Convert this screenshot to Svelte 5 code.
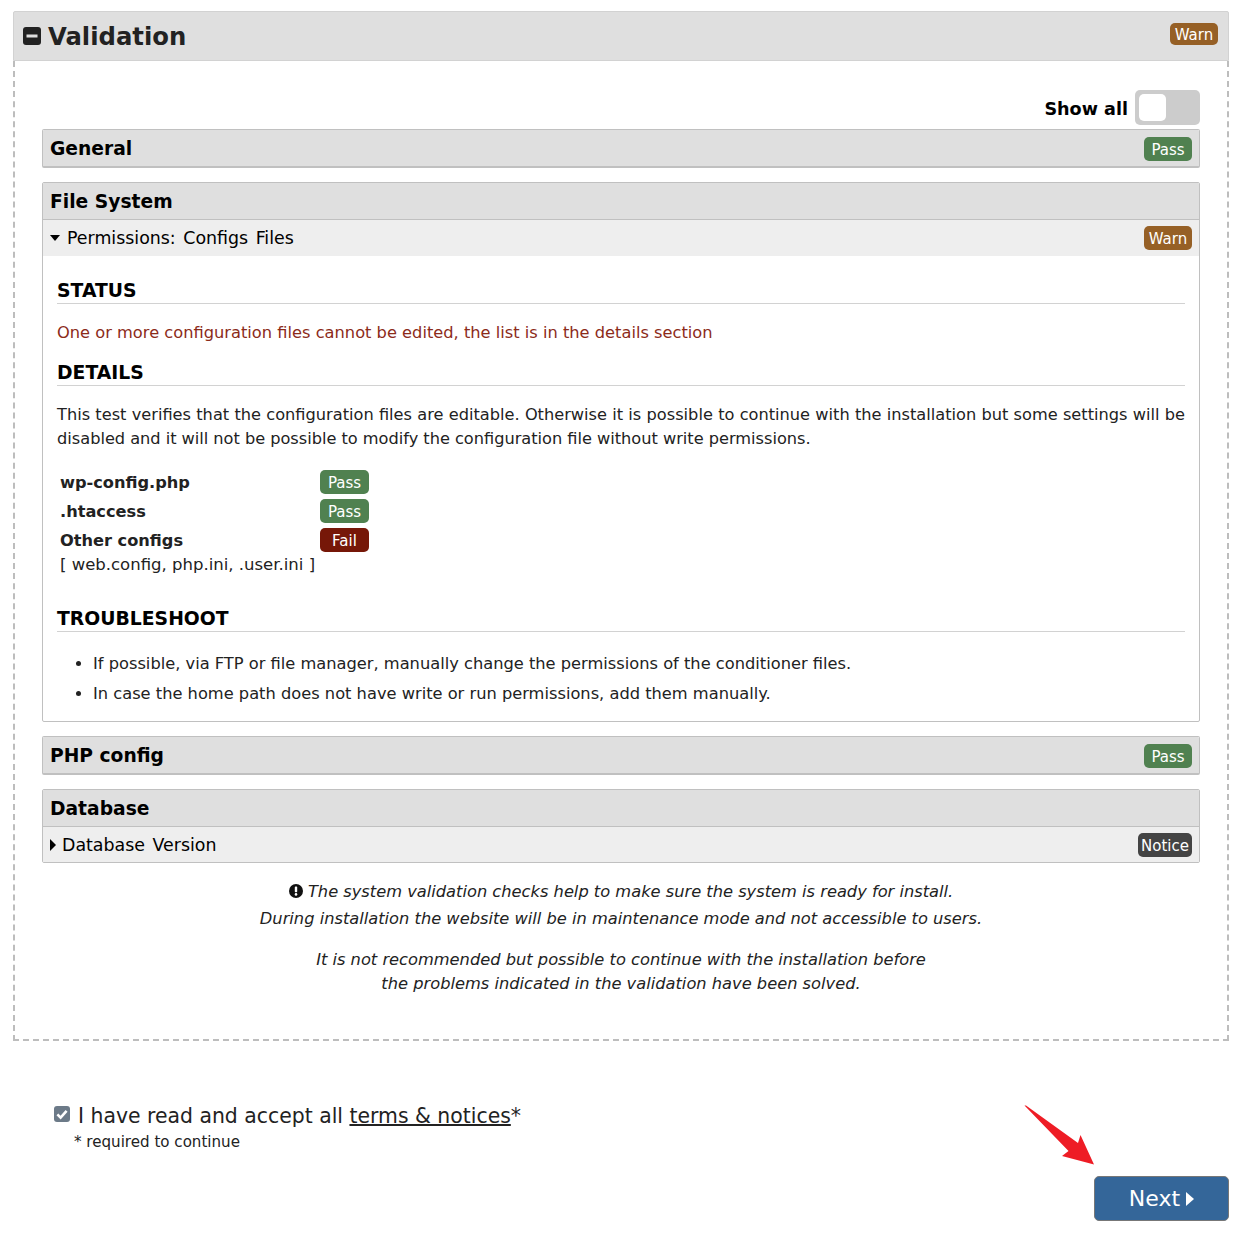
<script>
  const files = [
    { name: "wp-config.php", status: "Pass" },
    { name: ".htaccess", status: "Pass" },
    { name: "Other configs", status: "Fail" }
  ];
</script>

<div class="page">
  <section class="panel">
    <header class="panel-head">
      <h1>
        <svg class="minus" viewBox="0 0 18 18" aria-hidden="true">
          <rect width="18" height="18" rx="3" fill="#222" />
          <rect x="3.5" y="7.5" width="11" height="3" fill="#dfdfdf" />
        </svg>
        Validation
      </h1>
      <span class="badge warn">Warn</span>
    </header>

    <div class="panel-body">
      <div class="show-all">
        <span>Show all</span>
        <span class="toggle"><span class="knob"></span></span>
      </div>

      <div class="box closed">
        <div class="box-title">
          <span>General</span>
          <span class="badge pass">Pass</span>
        </div>
      </div>

      <div class="box">
        <div class="box-title"><span>File System</span></div>
        <div class="test-row">
          <span class="test-name"><i class="caret down"></i>Permissions: Configs Files</span>
          <span class="badge warn">Warn</span>
        </div>
        <div class="test-content">
          <h2>STATUS</h2>
          <p class="red">One or more configuration files cannot be edited, the list is in the details section</p>
          <h2>DETAILS</h2>
          <p class="just">This test verifies that the configuration files are editable. Otherwise it is possible to continue with the installation but some settings will be disabled and it will not be possible to modify the configuration file without write permissions.</p>
          <div class="file-list">
            {#each files as f}
              <div class="file-row">
                <b>{f.name}</b>
                <span class="badge {f.status.toLowerCase()}">{f.status}</span>
              </div>
            {/each}
            <div class="file-extra">[ web.config, php.ini, .user.ini ]</div>
          </div>
          <h2 class="trouble">TROUBLESHOOT</h2>
          <ul>
            <li>If possible, via FTP or file manager, manually change the permissions of the conditioner files.</li>
            <li>In case the home path does not have write or run permissions, add them manually.</li>
          </ul>
        </div>
      </div>

      <div class="box closed">
        <div class="box-title">
          <span>PHP config</span>
          <span class="badge pass">Pass</span>
        </div>
      </div>

      <div class="box">
        <div class="box-title"><span>Database</span></div>
        <div class="test-row last">
          <span class="test-name"><i class="caret right"></i>Database Version</span>
          <span class="badge notice">Notice</span>
        </div>
      </div>

      <div class="note">
        <p>
          <svg class="excl" viewBox="0 0 14 14" aria-hidden="true">
            <circle cx="7" cy="7" r="7" fill="#111" />
            <rect x="5.8" y="2.6" width="2.4" height="5.6" rx="0.8" fill="#fff" />
            <circle cx="7" cy="10.4" r="1.3" fill="#fff" />
          </svg>
          The system validation checks help to make sure the system is ready for install.<br />
          During installation the website will be in maintenance mode and not accessible to users.
        </p>
        <p class="second">
          It is not recommended but possible to continue with the installation before<br />
          the problems indicated in the validation have been solved.
        </p>
      </div>
    </div>
  </section>

  <div class="footer">
    <div class="accept">
      <label>
        <span class="check">
          <svg viewBox="0 0 16 16" aria-hidden="true">
            <path d="M3.4 8.4 L6.6 11.6 L12.6 4.8" fill="none" stroke="#fff" stroke-width="2.6" />
          </svg>
        </span>
        <span>I have read and accept all <u>terms &amp; notices</u>*</span>
      </label>
      <div class="required">* required to continue</div>
    </div>
    <button type="button" class="next">Next<i class="caret-next"></i></button>
  </div>

  <svg class="arrow" viewBox="0 0 73 62" aria-hidden="true">
    <polygon points="0.5,0.5 2,0.5 54,38 56.5,30 70,59.5 38,51 44.5,46" fill="#ee1c25" />
  </svg>
</div>

<style>
  :global(body) {
    margin: 0;
    background: #fff;
  }

  .page {
    position: relative;
    width: 1246px;
    height: 1242px;
    box-sizing: border-box;
    padding: 11px 17px 0 13px;
    font-family: "DejaVu Sans", Verdana, sans-serif;
    font-size: 16px;
    color: #222;
  }

  .panel-head {
    height: 50px;
    box-sizing: border-box;
    display: flex;
    align-items: center;
    justify-content: space-between;
    padding: 0 10px 0 9px;
    background: #dfdfdf;
    border: 1px solid #d2d2d2;
    border-radius: 2px 2px 0 0;
  }

  .panel-head .badge {
    height: 22px;
    line-height: 24px;
    margin-top: -4px;
  }

  h1 {
    margin: 0;
    display: flex;
    align-items: center;
    gap: 7px;
    font-size: 24.3px;
    font-weight: 700;
    color: #222;
  }

  .minus {
    width: 18px;
    height: 18px;
  }

  .panel-body {
    height: 980px;
    box-sizing: border-box;
    padding: 29px 27px 0;
    border: 2px dashed #bdbdbd;
    border-top: none;
  }

  .show-all {
    height: 39px;
    display: flex;
    justify-content: flex-end;
    gap: 7px;
    font-weight: 700;
    font-size: 17.6px;
    color: #000;
  }

  .show-all > span:first-child {
    line-height: 38px;
  }

  .toggle {
    width: 65px;
    height: 35px;
    box-sizing: border-box;
    padding: 4px;
    background: #ccc;
    border-radius: 5px;
  }

  .knob {
    display: block;
    width: 27px;
    height: 27px;
    background: #fff;
    border-radius: 5px;
  }

  .box {
    border: 1px solid #c0c0c0;
    border-radius: 2px;
    margin-bottom: 14px;
    overflow: hidden;
  }

  .box.closed {
    border-bottom-width: 2px;
  }

  .box-title {
    height: 36px;
    box-sizing: border-box;
    display: flex;
    align-items: center;
    justify-content: space-between;
    padding: 0 7px;
    background: #dfdfdf;
    font-size: 18.7px;
    font-weight: 700;
    color: #000;
  }

  .closed .badge {
    margin-top: 2px;
  }

  .test-row {
    height: 37px;
    box-sizing: border-box;
    display: flex;
    align-items: center;
    justify-content: space-between;
    padding: 0 7px;
    background: #eee;
    border-top: 1px solid #c0c0c0;
    font-size: 17.4px;
    word-spacing: 2px;
    color: #000;
  }

  .test-row.last {
    height: 36px;
  }

  .test-name {
    display: flex;
    align-items: center;
  }

  .caret {
    display: inline-block;
    width: 0;
    height: 0;
  }

  .caret.down {
    border-left: 5.5px solid transparent;
    border-right: 5.5px solid transparent;
    border-top: 6px solid #000;
    margin-right: 7px;
  }

  .caret.right {
    border-top: 6px solid transparent;
    border-bottom: 6px solid transparent;
    border-left: 6px solid #000;
    margin-right: 6px;
  }

  .badge {
    display: inline-block;
    min-width: 48px;
    box-sizing: border-box;
    height: 24px;
    line-height: 26px;
    padding: 0 4px;
    text-align: center;
    border-radius: 5px;
    color: #fff;
    font-size: 15px;
    font-weight: 400;
    word-spacing: 0;
  }

  .pass {
    background: #508150;
  }

  .warn {
    background: #966026;
  }

  .fail {
    background: #761708;
  }

  .notice {
    background: #444;
    min-width: 54px;
    padding: 0 3px;
  }

  .test-content {
    padding: 21px 14px 9px;
    font-size: 16.25px;
    line-height: 24px;
    color: #222;
  }

  h2 {
    margin: 0 0 17px;
    padding-top: 2px;
    font-size: 18.8px;
    line-height: 24px;
    font-weight: 700;
    color: #000;
    border-bottom: 1px solid #d2d2d2;
  }

  p {
    margin: 0;
  }

  .red {
    color: #8c2b1a;
    margin-bottom: 14px;
  }

  .just {
    text-align: justify;
    font-size: 16.2px;
    word-spacing: -0.1px;
  }

  .file-list {
    margin: 16px 0 0 3px;
  }

  .file-row {
    display: grid;
    grid-template-columns: 260px 49px;
    align-items: center;
    height: 29px;
    font-size: 16.2px;
    color: #222;
  }

  .file-row b {
    padding-top: 2px;
  }

  .file-extra {
    font-size: 16.5px;
    line-height: 20px;
    margin-top: 1px;
  }

  .trouble {
    margin-top: 30px;
  }

  ul {
    margin: 20px 0 0;
    padding: 0 0 0 36px;
  }

  li {
    margin-bottom: 6px;
  }

  .note {
    padding-top: 1px;
    text-align: center;
    font-style: italic;
    font-size: 16.25px;
    line-height: 27px;
    color: #222;
  }

  .excl {
    width: 14px;
    height: 14px;
    vertical-align: -1px;
  }

  .second {
    margin-top: 16px;
    line-height: 24px;
  }

  .footer {
    margin-top: 62px;
    display: flex;
    justify-content: space-between;
    align-items: flex-start;
  }

  .accept {
    margin: 1px 0 0 41px;
  }

  label {
    display: flex;
    align-items: center;
    gap: 8px;
    font-size: 20.4px;
    color: #222;
  }

  .check {
    width: 16px;
    height: 16px;
    margin-top: -4px;
    background: #6c7a88;
    border-radius: 3px;
    display: block;
  }

  .check svg {
    display: block;
  }

  u {
    text-decoration-thickness: 2px;
  }

  .required {
    margin: 5px 0 0 20px;
    font-size: 15.1px;
    color: #222;
  }

  .next {
    margin-top: 73px;
    width: 135px;
    height: 45px;
    background: #346699;
    border: 1px solid #777;
    border-radius: 5px;
    color: #fff;
    font: 400 22px "DejaVu Sans", Verdana, sans-serif;
    display: flex;
    align-items: center;
    justify-content: center;
    gap: 6px;
  }

  .caret-next {
    border-top: 7px solid transparent;
    border-bottom: 7px solid transparent;
    border-left: 8px solid #fff;
  }

  .arrow {
    position: absolute;
    left: 1023.5px;
    top: 1105px;
    width: 73px;
    height: 62px;
  }
</style>
